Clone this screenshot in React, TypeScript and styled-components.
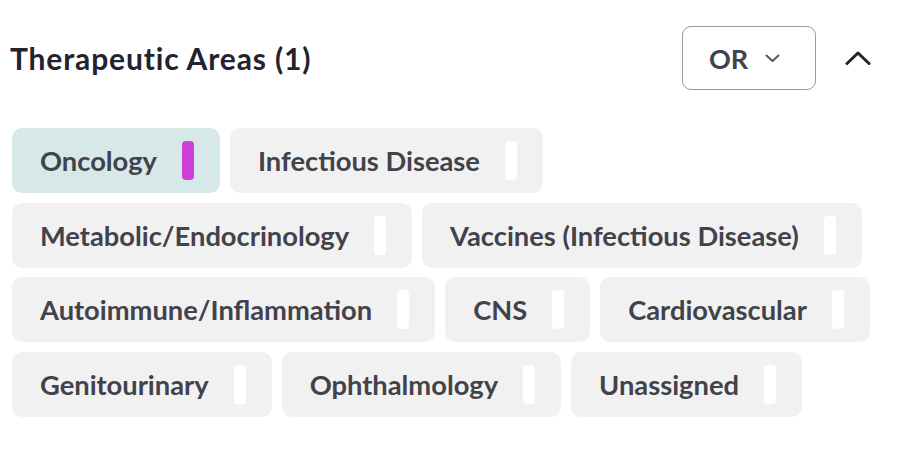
import React, { useState } from "react";
import styled, { createGlobalStyle } from "styled-components";

const Global = createGlobalStyle`
  html, body { margin: 0; padding: 0; background: #ffffff; }
  body { font-family: Lato, "Liberation Sans", sans-serif; }
`;

const Panel = styled.div`
  width: 880px;
  padding: 26px 0 0 12px;
  box-sizing: content-box;
`;

const Header = styled.div`
  display: flex;
  align-items: center;
  height: 64px;
`;

const Title = styled.h2`
  margin: 0 0 0 -2px;
  flex: 1;
  font-size: 30px;
  font-weight: 700;
  color: #22232e;
  letter-spacing: 0.85px;
`;

const OrButton = styled.button`
  display: flex;
  align-items: center;
  gap: 17px;
  width: 134px;
  height: 64px;
  box-sizing: border-box;
  padding: 0 0 0 26px;
  border: 1.5px solid #9c9c9c;
  border-radius: 9px;
  background: #fff;
  font-family: inherit;
  font-size: 27px;
  font-weight: 700;
  color: #42424c;
  cursor: pointer;
`;

const CollapseButton = styled.button`
  display: flex;
  align-items: center;
  justify-content: center;
  width: 64px;
  height: 64px;
  margin: 0 2px 0 10px;
  padding: 0;
  border: none;
  background: none;
  cursor: pointer;
`;

const Chips = styled.div`
  display: flex;
  flex-wrap: wrap;
  gap: 9.5px 10px;
  margin-top: 38px;
`;

const Chip = styled.button<{ $selected: boolean }>`
  display: flex;
  align-items: center;
  gap: 25px;
  height: 65px;
  box-sizing: border-box;
  padding: 0 26px 0 28px;
  border: none;
  border-radius: 10px;
  background: ${(p) => (p.$selected ? "#d6e8e8" : "#f1f1f1")};
  font-family: inherit;
  font-size: 27.3px;
  font-weight: 700;
  color: #42424b;
  cursor: pointer;
`;

const Bar = styled.span<{ $selected: boolean }>`
  width: 12px;
  height: 39px;
  border-radius: 4px;
  background: ${(p) => (p.$selected ? "#cc3fd9" : "#ffffff")};
`;

const areas = [
  "Oncology",
  "Infectious Disease",
  "Metabolic/Endocrinology",
  "Vaccines (Infectious Disease)",
  "Autoimmune/Inflammation",
  "CNS",
  "Cardiovascular",
  "Genitourinary",
  "Ophthalmology",
  "Unassigned",
];

export default function App() {
  const [selected, setSelected] = useState<string[]>(["Oncology"]);
  const toggle = (a: string) =>
    setSelected((s) => (s.includes(a) ? s.filter((x) => x !== a) : [...s, a]));
  return (
    <>
      <Global />
      <Panel>
        <Header>
          <Title>Therapeutic Areas ({selected.length})</Title>
          <OrButton>
            OR
            <svg width="15" height="9" viewBox="0 0 15 9" fill="none">
              <path d="M1.5 1.5 L7.5 7 L13.5 1.5" stroke="#55555e" strokeWidth="2" strokeLinecap="round" strokeLinejoin="round" />
            </svg>
          </OrButton>
          <CollapseButton aria-label="collapse">
            <svg width="26" height="16" viewBox="0 0 26 16" fill="none">
              <path d="M2 13.5 L13 3 L24 13.5" stroke="#23232b" strokeWidth="3" strokeLinecap="round" strokeLinejoin="round" />
            </svg>
          </CollapseButton>
        </Header>
        <Chips>
          {areas.map((a) => {
            const sel = selected.includes(a);
            return (
              <Chip key={a} $selected={sel} onClick={() => toggle(a)}>
                {a}
                <Bar $selected={sel} />
              </Chip>
            );
          })}
        </Chips>
      </Panel>
    </>
  );
}
